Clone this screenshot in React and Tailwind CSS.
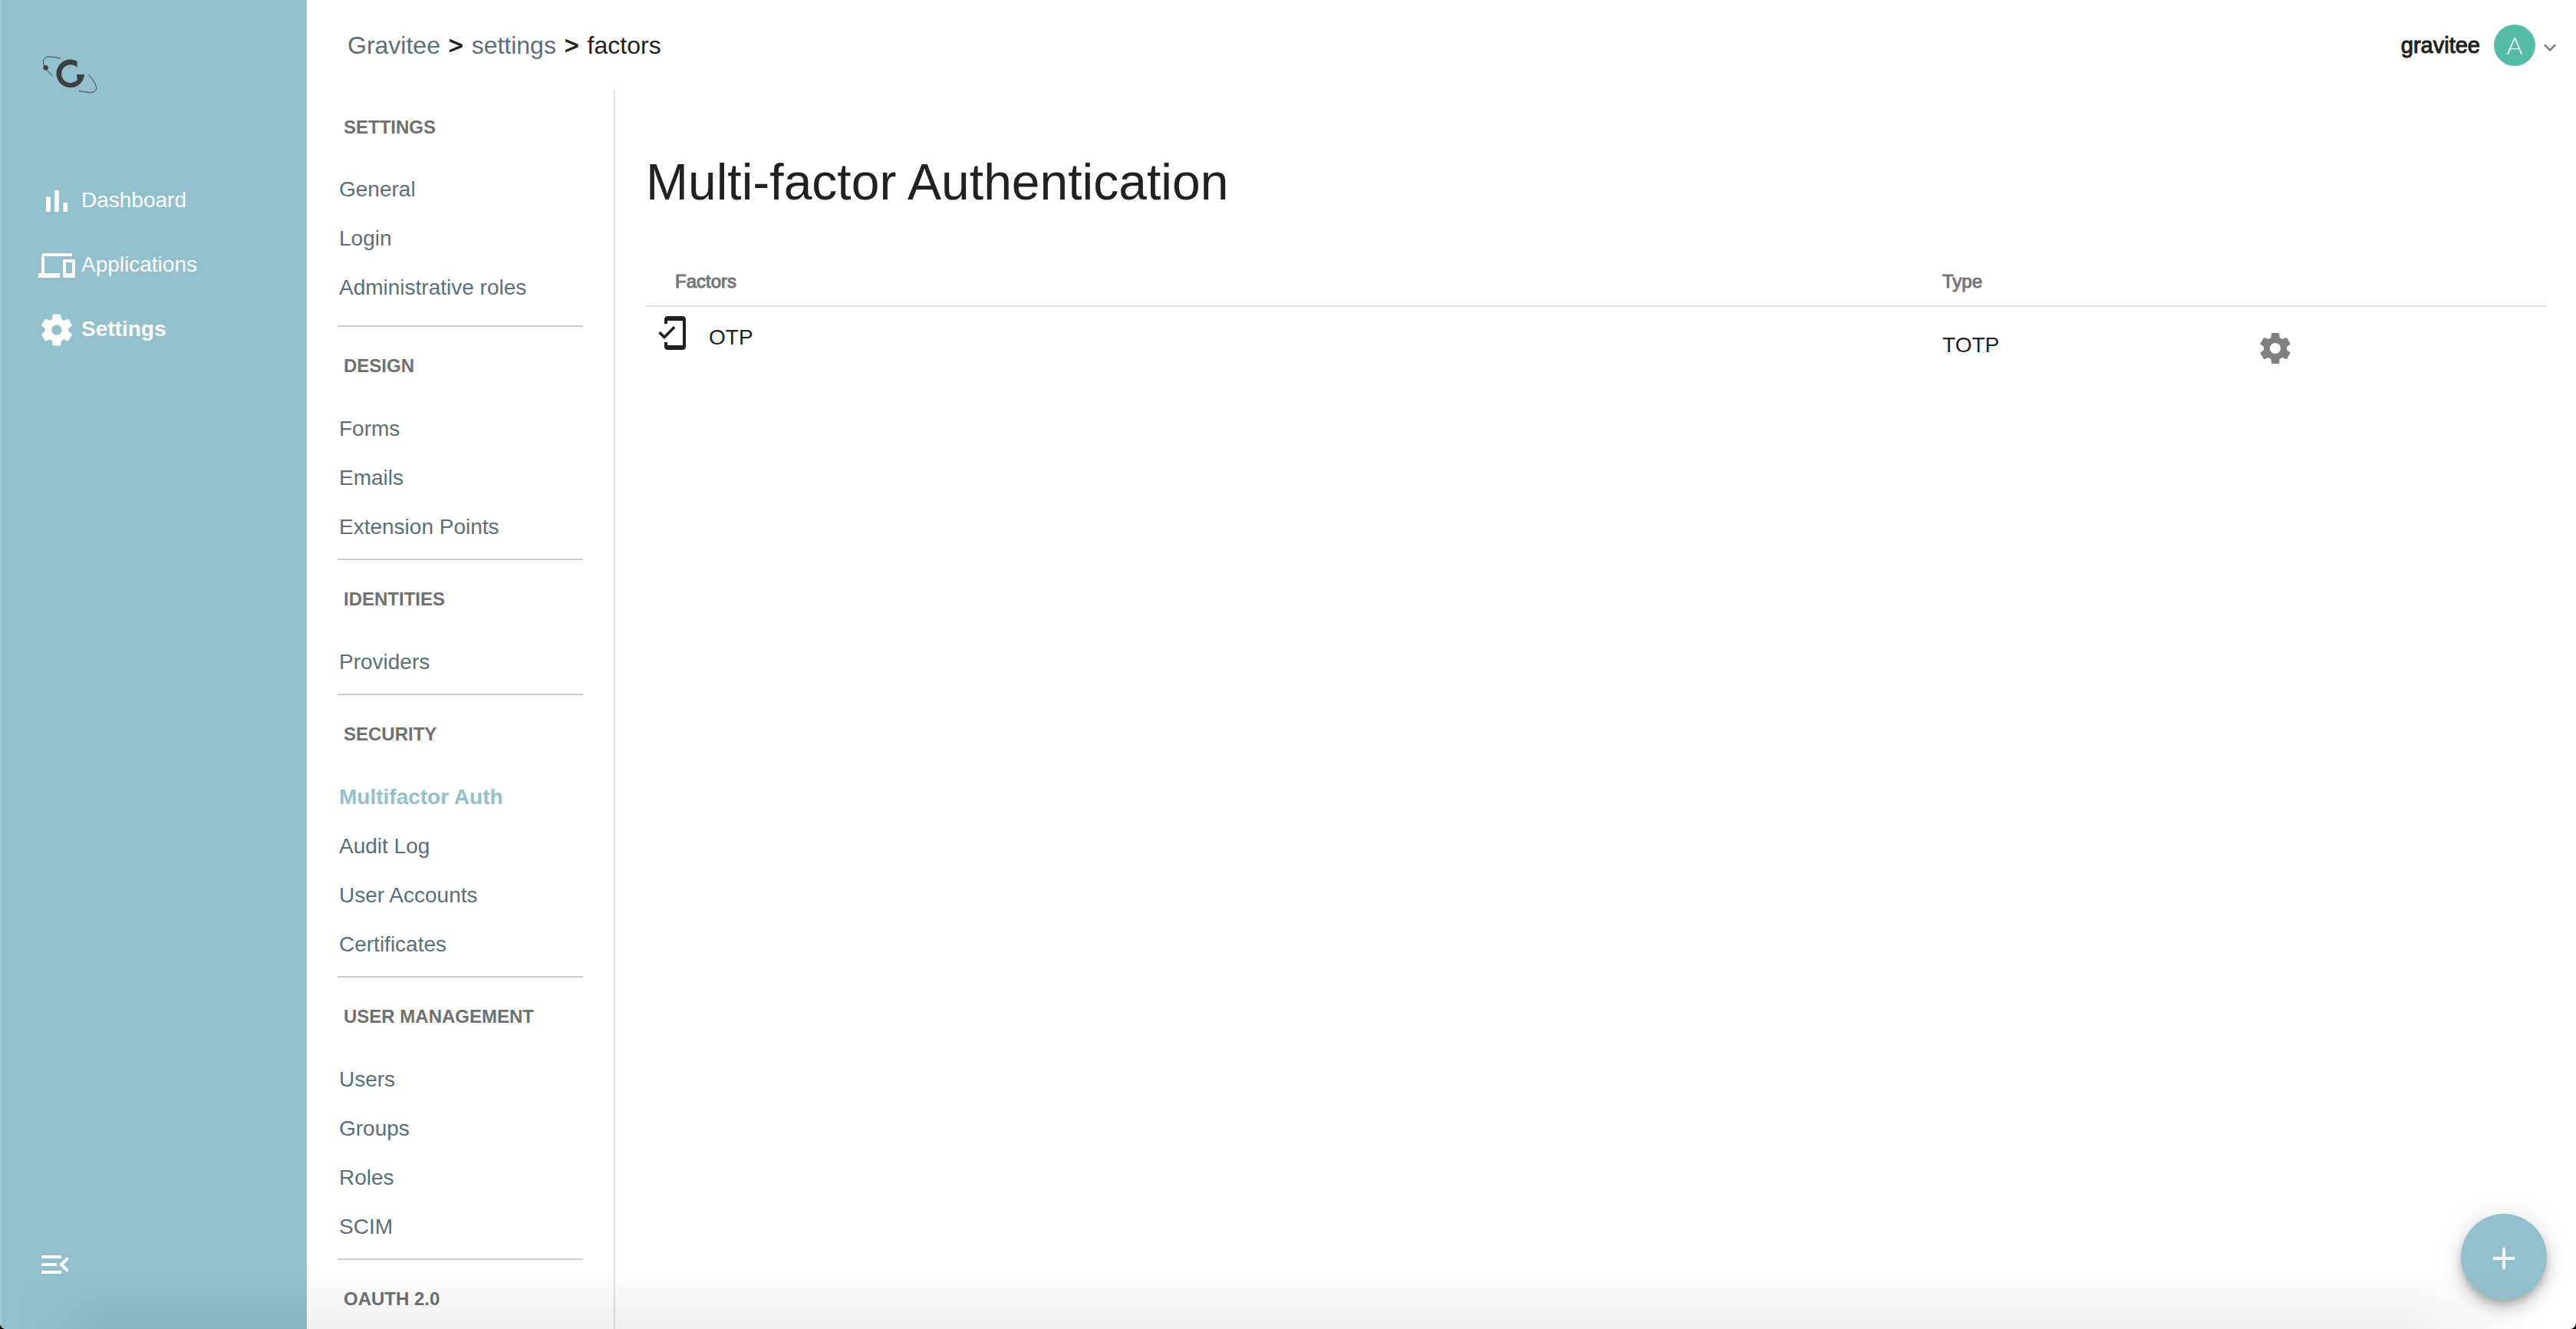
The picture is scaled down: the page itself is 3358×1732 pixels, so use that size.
const ICONS = {
  dashboard: "M5 9.2h3V19H5zM10.6 5h2.8v14h-2.8zm5.6 8H19v6h-2.8z",
  applications:
    "M4 6h18V4H4c-1.1 0-2 .9-2 2v11H0v3h14v-3H4V6zm19 2h-6c-.55 0-1 .45-1 1v10c0 .55.45 1 1 1h6c.55 0 1-.45 1-1V9c0-.55-.45-1-1-1zm-1 9h-4v-7h4v7z",
  settings:
    "M19.43 12.98c.04-.32.07-.64.07-.98s-.03-.66-.07-.98l2.11-1.65c.19-.15.24-.42.12-.64l-2-3.46c-.12-.22-.39-.3-.61-.22l-2.49 1c-.52-.4-1.08-.73-1.69-.98l-.38-2.65C14.46 2.18 14.25 2 14 2h-4c-.25 0-.46.18-.49.42l-.38 2.65c-.61.25-1.17.59-1.69.98l-2.49-1c-.23-.09-.49 0-.61.22l-2 3.46c-.13.22-.07.49.12.64l2.11 1.65c-.04.32-.07.65-.07.98s.03.66.07.98l-2.11 1.65c-.19.15-.24.42-.12.64l2 3.46c.12.22.39.3.61.22l2.49-1c.52.4 1.08.73 1.69.98l.38 2.65c.03.24.24.42.49.42h4c.25 0 .46-.18.49-.42l.38-2.65c.61-.25 1.17-.59 1.69-.98l2.49 1c.23.09.49 0 .61-.22l2-3.46c.12-.22.07-.49-.12-.64l-2.11-1.65zM12 15.5c-1.93 0-3.5-1.57-3.5-3.5s1.57-3.5 3.5-3.5 3.5 1.57 3.5 3.5-1.57 3.5-3.5 3.5z",
  menuOpen:
    "M3 18h13v-2H3v2zm0-5h10v-2H3v2zm0-7v2h13V6H3zm18 9.59L17.42 12 21 8.41 19.59 7l-5 5 5 5L21 15.59z",
  mobileFriendly:
    "M19 1H9c-1.1 0-2 .9-2 2v3h2V4h10v16H9v-2H7v3c0 1.1.9 2 2 2h10c1.1 0 2-.9 2-2V3c0-1.1-.9-2-2-2zM7.01 13.47l-2.55-2.55-1.27 1.27L7 16l7.19-7.19-1.27-1.27z",
  arrowDown: "M7.41 8.59L12 13.17l4.59-4.58L18 10l-6 6-6-6z",
  add: "M19 13h-6v6h-2v-6H5v-2h6V5h2v6h6v2z",
};

function Icon({ name, className = "size-12", bold = false }) {
  return (
    <svg
      viewBox="0 0 24 24"
      aria-hidden="true"
      className={className}
      fill="currentColor"
      stroke={bold ? "currentColor" : "none"}
      strokeWidth={bold ? 0.4 : 0}
    >
      <path d={ICONS[name]} />
    </svg>
  );
}

function Logo() {
  return (
    <svg viewBox="0 0 80 60" className="h-[60px] w-20" role="img" aria-label="Gravitee">
      <g fill="none" stroke="#3b3f40">
        <path d="M29 10.3C22 8 14 7.4 10.500 8.500C6 10 5.500 16 8.500 21.500C10.500 25 14 29 18.500 33" strokeWidth="1" />
        <path d="M65.500 31.500C70 36 76 44 75.500 49.500C75 56 65 55 53 52.500" strokeWidth="1" />
      </g>
      <circle cx="9.500" cy="22.300" r="3.200" fill="#3b3f40" />
      <path
        d="M50.500 13.800V22A11.800 11.800 0 1 0 50.800 38L50 31H60A18.300 18.300 0 1 1 50.500 13.800Z"
        fill="#3b3f40"
      />
    </svg>
  );
}

const MAIN_LINKS = [
  { label: "Dashboard", icon: "dashboard" },
  { label: "Applications", icon: "applications" },
  { label: "Settings", icon: "settings", active: true },
];

const GROUPS = [
  { title: "SETTINGS", links: ["General", "Login", "Administrative roles"] },
  { title: "DESIGN", links: ["Forms", "Emails", "Extension Points"] },
  { title: "IDENTITIES", links: ["Providers"] },
  { title: "SECURITY", links: ["Multifactor Auth", "Audit Log", "User Accounts", "Certificates"] },
  { title: "USER MANAGEMENT", links: ["Users", "Groups", "Roles", "SCIM"] },
  { title: "OAUTH 2.0", links: [] },
];

function Sidebar() {
  return (
    <aside className="flex w-[400px] shrink-0 flex-col border-l-2 border-[#a5cbd5] bg-[#92c1cd] text-white">
      <a href="#home" className="mt-[66px] ml-12 w-20">
        <Logo />
      </a>
      <nav aria-label="Main" className="mt-[94px] ml-12 flex flex-col">
        {MAIN_LINKS.map(({ label, icon, active }) => (
          <a
            key={label}
            href={"#" + label.toLowerCase()}
            className={
              "flex h-[84px] items-center gap-2 text-[28px] leading-8 " + (active ? "font-bold" : "")
            }
          >
            <Icon name={icon} bold={active} />
            <span className="pb-0.5">{label}</span>
          </a>
        ))}
      </nav>
      <button type="button" aria-label="Collapse menu" className="mt-auto mb-[60px] ml-[46px] size-12">
        <Icon name="menuOpen" />
      </button>
    </aside>
  );
}

function SettingsNav() {
  return (
    <nav
      aria-label="Settings"
      className="w-[402px] shrink-0 overflow-hidden border-r-2 border-[#e0e0e0] pr-10 pl-10"
    >
      {GROUPS.map(({ title, links }, i) => (
        <section
          key={title}
          className={
            i === 0
              ? "border-b-2 border-[#cccccc] pb-[18px]"
              : i < GROUPS.length - 1
                ? "border-b-2 border-[#cccccc] pb-2.5"
                : ""
          }
        >
          <h2
            className={
              "flex items-center pl-2 text-[24px] leading-8 font-bold text-[#707070] " +
              (i === 0 ? "h-24" : "h-[100px] pt-0.5")
            }
          >
            {title}
          </h2>
          <ul>
            {links.map((label) => (
              <li key={label}>
                <a
                  href={"#" + label.toLowerCase().replaceAll(" ", "-")}
                  className={
                    "flex h-16 items-center pt-0.5 pl-0.5 text-[28px] leading-8 " +
                    (label === "Multifactor Auth" ? "font-bold text-[#92c1cd]" : "text-[#5a6f7b]")
                  }
                >
                  {label}
                </a>
              </li>
            ))}
          </ul>
        </section>
      ))}
    </nav>
  );
}

function TopBar() {
  return (
    <header className="flex h-[118px] shrink-0 items-center justify-between pl-[53px] pr-[18px]">
      <nav aria-label="Breadcrumb" className="flex items-center gap-[11px] text-[32px] leading-10">
        <a href="#gravitee" className="text-[#5a6f7b]">Gravitee</a>
        <span className="[-webkit-text-stroke:1px]">&gt;</span>
        <a href="#settings" className="text-[#5a6f7b]">settings</a>
        <span className="[-webkit-text-stroke:1px]">&gt;</span>
        <span>factors</span>
      </nav>
      <button type="button" className="flex items-center text-[29px] leading-8">
        <span className="[-webkit-text-stroke:1px]">gravitee</span>
        <span className="ml-[18px] flex size-[54px] items-center justify-center rounded-full bg-[#54bba7] font-[Lato,sans-serif] text-[32px] leading-8 font-light text-white">
          A
        </span>
        <Icon name="arrowDown" className="mt-1.5 ml-[3px] size-8 text-[#808080]" />
      </button>
    </header>
  );
}

function Factors() {
  return (
    <main className="min-w-0 flex-1 pr-[38px] pl-10">
      <h1 className="mt-[79px] text-[66px] leading-20">Multi-factor Authentication</h1>
      <table className="mt-14 w-full table-fixed border-collapse text-left">
        <colgroup>
          <col className="w-[68%]" />
          <col className="w-[410px]" />
          <col />
        </colgroup>
        <thead>
          <tr className="h-[66px] border-b-2 border-[#e0e0e0] text-[24px] leading-8 text-[#757575]">
            <th scope="col" className="pt-0.5 pl-[38px] font-normal [-webkit-text-stroke:1px]">Factors</th>
            <th scope="col" className="pt-0.5 pl-[5px] font-normal [-webkit-text-stroke:1px]">Type</th>
            <td />
          </tr>
        </thead>
        <tbody>
          <tr className="text-[28px] leading-8">
            <td className="pt-2.5 pl-2.5 align-top">
              <div className="flex gap-6">
                <Icon name="mobileFriendly" />
                <span className="mt-3.5">OTP</span>
              </div>
            </td>
            <td className="pt-[34px] pl-[5px] align-top">TOTP</td>
            <td className="pt-[30px] pl-[5px] align-top">
              <button type="button" aria-label="Configure OTP" className="block text-[#808080]">
                <Icon name="settings" />
              </button>
            </td>
          </tr>
        </tbody>
      </table>
    </main>
  );
}

export default function App() {
  return (
    <div className="h-screen overflow-hidden bg-black">
      <div className="relative flex h-full overflow-hidden rounded-b-lg bg-white font-['Liberation_Sans',Arial,sans-serif] text-[#212121]">
        <Sidebar />
        <div className="flex min-w-0 flex-1 flex-col">
          <TopBar />
          <div className="flex min-h-0 flex-1">
            <SettingsNav />
            <Factors />
          </div>
        </div>
        <button
          type="button"
          aria-label="Add factor"
          className="absolute right-[38px] bottom-[38px] flex size-28 items-center justify-center rounded-full bg-[#92c1cd] pt-1 text-white shadow-[0_6px_10px_-2px_rgba(0,0,0,0.2),0_12px_20px_rgba(0,0,0,0.14),0_2px_36px_rgba(0,0,0,0.12)]"
        >
          <Icon name="add" />
        </button>
        <div className="pointer-events-none absolute right-0 bottom-0 left-0 h-20 bg-linear-to-t from-black/6 to-transparent [mask-image:linear-gradient(to_right,transparent_20px,black_150px,black_calc(100%-220px),transparent_calc(100%-40px))]" />
      </div>
    </div>
  );
}
